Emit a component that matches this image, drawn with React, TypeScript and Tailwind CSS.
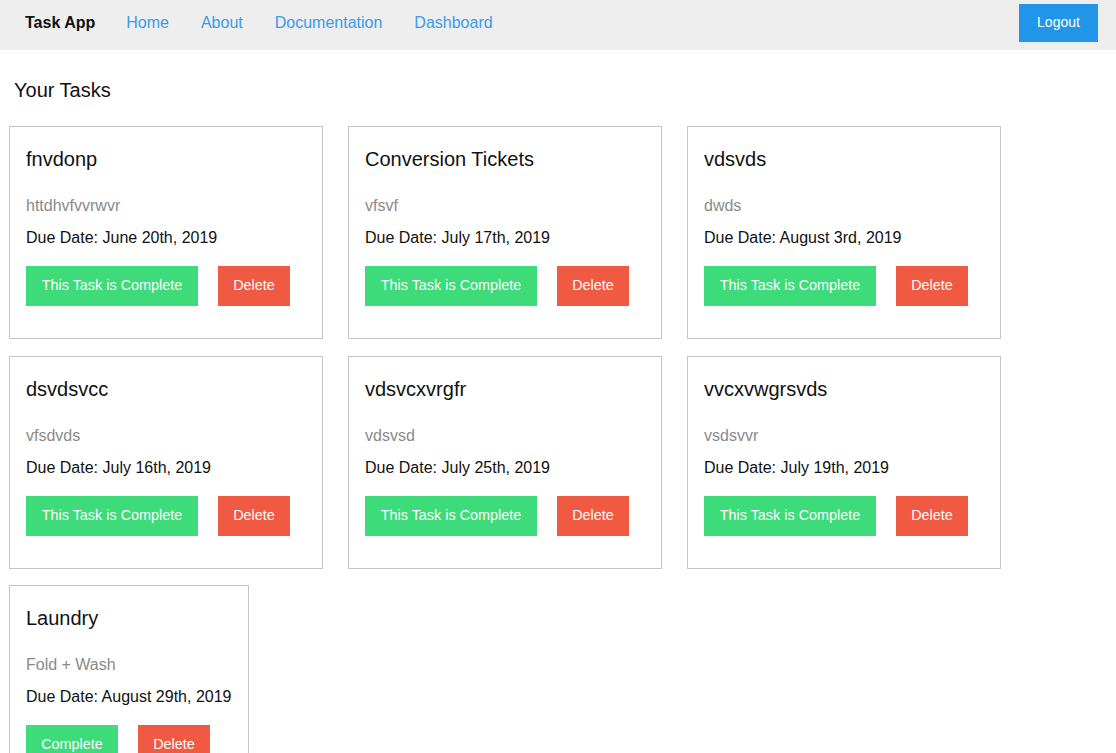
import React from "react";

type Task = { title: string; desc: string; due: string; label: string; w: string; gw: string };

const tasks: Task[] = [
  { title: "fnvdonp", desc: "httdhvfvvrwvr", due: "June 20th, 2019", label: "This Task is Complete", w: "w-[314px]", gw: "w-[172px]" },
  { title: "Conversion Tickets", desc: "vfsvf", due: "July 17th, 2019", label: "This Task is Complete", w: "w-[314px]", gw: "w-[172px]" },
  { title: "vdsvds", desc: "dwds", due: "August 3rd, 2019", label: "This Task is Complete", w: "w-[314px]", gw: "w-[172px]" },
  { title: "dsvdsvcc", desc: "vfsdvds", due: "July 16th, 2019", label: "This Task is Complete", w: "w-[314px]", gw: "w-[172px]" },
  { title: "vdsvcxvrgfr", desc: "vdsvsd", due: "July 25th, 2019", label: "This Task is Complete", w: "w-[314px]", gw: "w-[172px]" },
  { title: "vvcxvwgrsvds", desc: "vsdsvvr", due: "July 19th, 2019", label: "This Task is Complete", w: "w-[314px]", gw: "w-[172px]" },
  { title: "Laundry", desc: "Fold + Wash", due: "August 29th, 2019", label: "Complete", w: "w-[240px]", gw: "w-[92px]" },
];

function Card({ t }: { t: Task }) {
  return (
    <div className={`${t.w} h-[213px] border border-[#c4c4c4] bg-white pl-[16px] pt-[21px] flex flex-col`}>
      <div className="text-[20px] leading-[23px] text-[#111]">{t.title}</div>
      <div className="mt-[26px] text-[16px] leading-[18px] text-[#8a8a8a]">{t.desc}</div>
      <div className="mt-[14px] text-[16px] leading-[18px] text-[#111]">Due Date: {t.due}</div>
      <div className="mt-[19px] flex gap-[20px]">
        <button className={`${t.gw} h-[40px] bg-[#3ddb7a] text-white text-[14.4px]`}>{t.label}</button>
        <button className="w-[72px] h-[40px] bg-[#f05a43] text-white text-[14.4px]">Delete</button>
      </div>
    </div>
  );
}

export default function App() {
  return (
    <div className="min-h-[753px] bg-white" style={{ fontFamily: '"Liberation Sans", Arial, sans-serif' }}>
      <nav className="h-[50px] bg-[#eeeeee] flex items-center pl-[25px] pr-[18px]">
        <span className="font-bold text-[16px] text-[#111] mr-[31px] -mt-[4px]">Task App</span>
        <div className="flex gap-[32px] text-[16px] text-[#3a9be8] -mt-[4px]">
          <span>Home</span>
          <span>About</span>
          <span>Documentation</span>
          <span>Dashboard</span>
        </div>
        <button className="ml-auto h-[38px] w-[79px] bg-[#2196e8] text-white text-[14px] -mt-[5px]">Logout</button>
      </nav>
      <h1 className="text-[20px] text-[#111] pl-[14px] mt-[29px] leading-[23px]">Your Tasks</h1>
      <div className="pl-[9px] mt-[24px] flex flex-wrap gap-x-[25px] gap-y-[16.5px] w-[1030px]">
        {tasks.map((t) => (
          <Card key={t.title} t={t} />
        ))}
      </div>
    </div>
  );
}
